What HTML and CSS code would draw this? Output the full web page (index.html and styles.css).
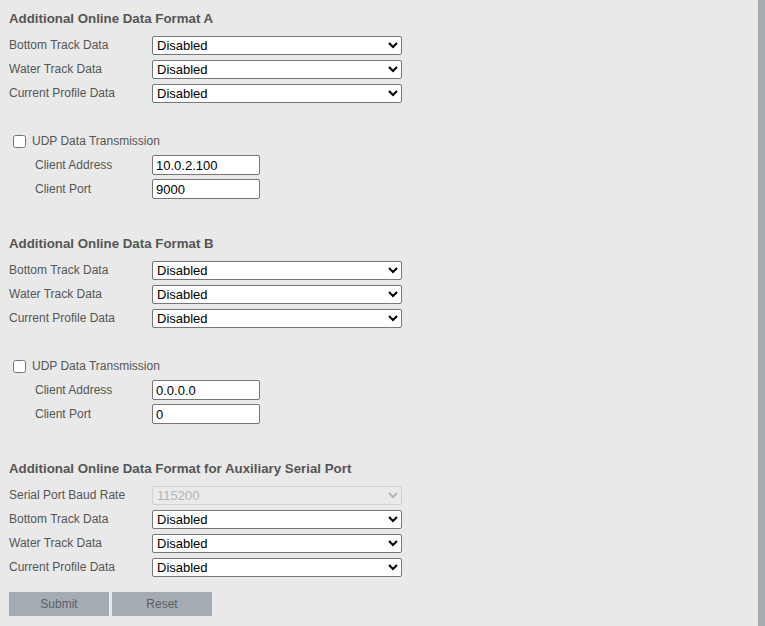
FILE: index.html
```html
<!DOCTYPE html>
<html>
<head>
<meta charset="utf-8">
<link rel="stylesheet" href="styles.css">
</head>
<body>
<div class="page">
  <main class="content">
    <section class="section">
      <h2 class="heading">Additional Online Data Format A</h2>
      <div class="row"><label class="label">Bottom Track Data</label><select class="sel"><option>Disabled</option></select></div>
      <div class="row"><label class="label">Water Track Data</label><select class="sel"><option>Disabled</option></select></div>
      <div class="row"><label class="label">Current Profile Data</label><select class="sel"><option>Disabled</option></select></div>
      <div class="row udp"><input type="checkbox" class="chk"><span class="chk-label">UDP Data Transmission</span></div>
      <div class="row"><label class="label sub">Client Address</label><input class="txt" type="text" value="10.0.2.100"></div>
      <div class="row"><label class="label sub">Client Port</label><input class="txt" type="text" value="9000"></div>
    </section>
    <section class="section">
      <h2 class="heading">Additional Online Data Format B</h2>
      <div class="row"><label class="label">Bottom Track Data</label><select class="sel"><option>Disabled</option></select></div>
      <div class="row"><label class="label">Water Track Data</label><select class="sel"><option>Disabled</option></select></div>
      <div class="row"><label class="label">Current Profile Data</label><select class="sel"><option>Disabled</option></select></div>
      <div class="row udp"><input type="checkbox" class="chk"><span class="chk-label">UDP Data Transmission</span></div>
      <div class="row"><label class="label sub">Client Address</label><input class="txt" type="text" value="0.0.0.0"></div>
      <div class="row"><label class="label sub">Client Port</label><input class="txt" type="text" value="0"></div>
    </section>
    <section class="section">
      <h2 class="heading">Additional Online Data Format for Auxiliary Serial Port</h2>
      <div class="row"><label class="label">Serial Port Baud Rate</label><select class="sel" disabled><option>115200</option></select></div>
      <div class="row"><label class="label">Bottom Track Data</label><select class="sel"><option>Disabled</option></select></div>
      <div class="row"><label class="label">Water Track Data</label><select class="sel"><option>Disabled</option></select></div>
      <div class="row"><label class="label">Current Profile Data</label><select class="sel"><option>Disabled</option></select></div>
      <div class="buttons">
        <button class="btn" type="button">Submit</button>
        <button class="btn" type="button">Reset</button>
      </div>
    </section>
  </main>
  <aside class="side"></aside>
</div>
</body>
</html>
```
FILE: styles.css
```css
html, body {
  margin: 0;
  padding: 0;
  height: 100%;
}
body {
  background: #e9e9e9;
  font-family: "Liberation Sans", Arial, sans-serif;
  font-size: 12px;
  color: #555;
}
.page {
  display: flex;
  height: 626px;
  overflow: hidden;
}
.content {
  flex: 1;
  padding: 9px 9px 0 9px;
}
.side {
  width: 7px;
  background: #a4abb3;
}
.section {
  display: flex;
  flex-direction: column;
  margin-bottom: 33px;
}
.heading {
  margin: 0 0 4px 0;
  height: 20px;
  line-height: 20px;
  font-size: 13.3px;
  font-weight: bold;
  color: #555;
}
.row {
  display: flex;
  align-items: center;
  height: 24px;
}
.label {
  width: 143px;
  flex: none;
}
.label.sub {
  padding-left: 26px;
  width: 117px;
}
.udp {
  margin-top: 24px;
}
.chk {
  margin: 0 6px 0 4px;
  width: 13px;
  height: 13px;
}
.sel {
  width: 250px;
  height: 19px;
  font-family: "Liberation Sans", Arial, sans-serif;
  font-size: 13px;
  color: #000;
  background: #fff;
  border: 1px solid #767676;
  border-radius: 2px;
  padding: 0;
}
.sel:disabled {
  color: #a0a0a0;
  background: #ebebeb;
  border-color: #c8c8c8;
}
.txt {
  width: 108px;
  height: 20px;
  box-sizing: border-box;
  font-family: "Liberation Sans", Arial, sans-serif;
  font-size: 13px;
  color: #000;
  background: #fff;
  border: 1px solid #767676;
  border-radius: 2px;
  padding: 0 3px;
}
.buttons {
  display: flex;
  gap: 3px;
  margin-top: 13px;
}
.btn {
  width: 100px;
  height: 24px;
  border: none;
  background: #a4abb3;
  color: #5a5f66;
  font-family: "Liberation Sans", Arial, sans-serif;
  font-size: 12px;
  padding: 0;
}
```
